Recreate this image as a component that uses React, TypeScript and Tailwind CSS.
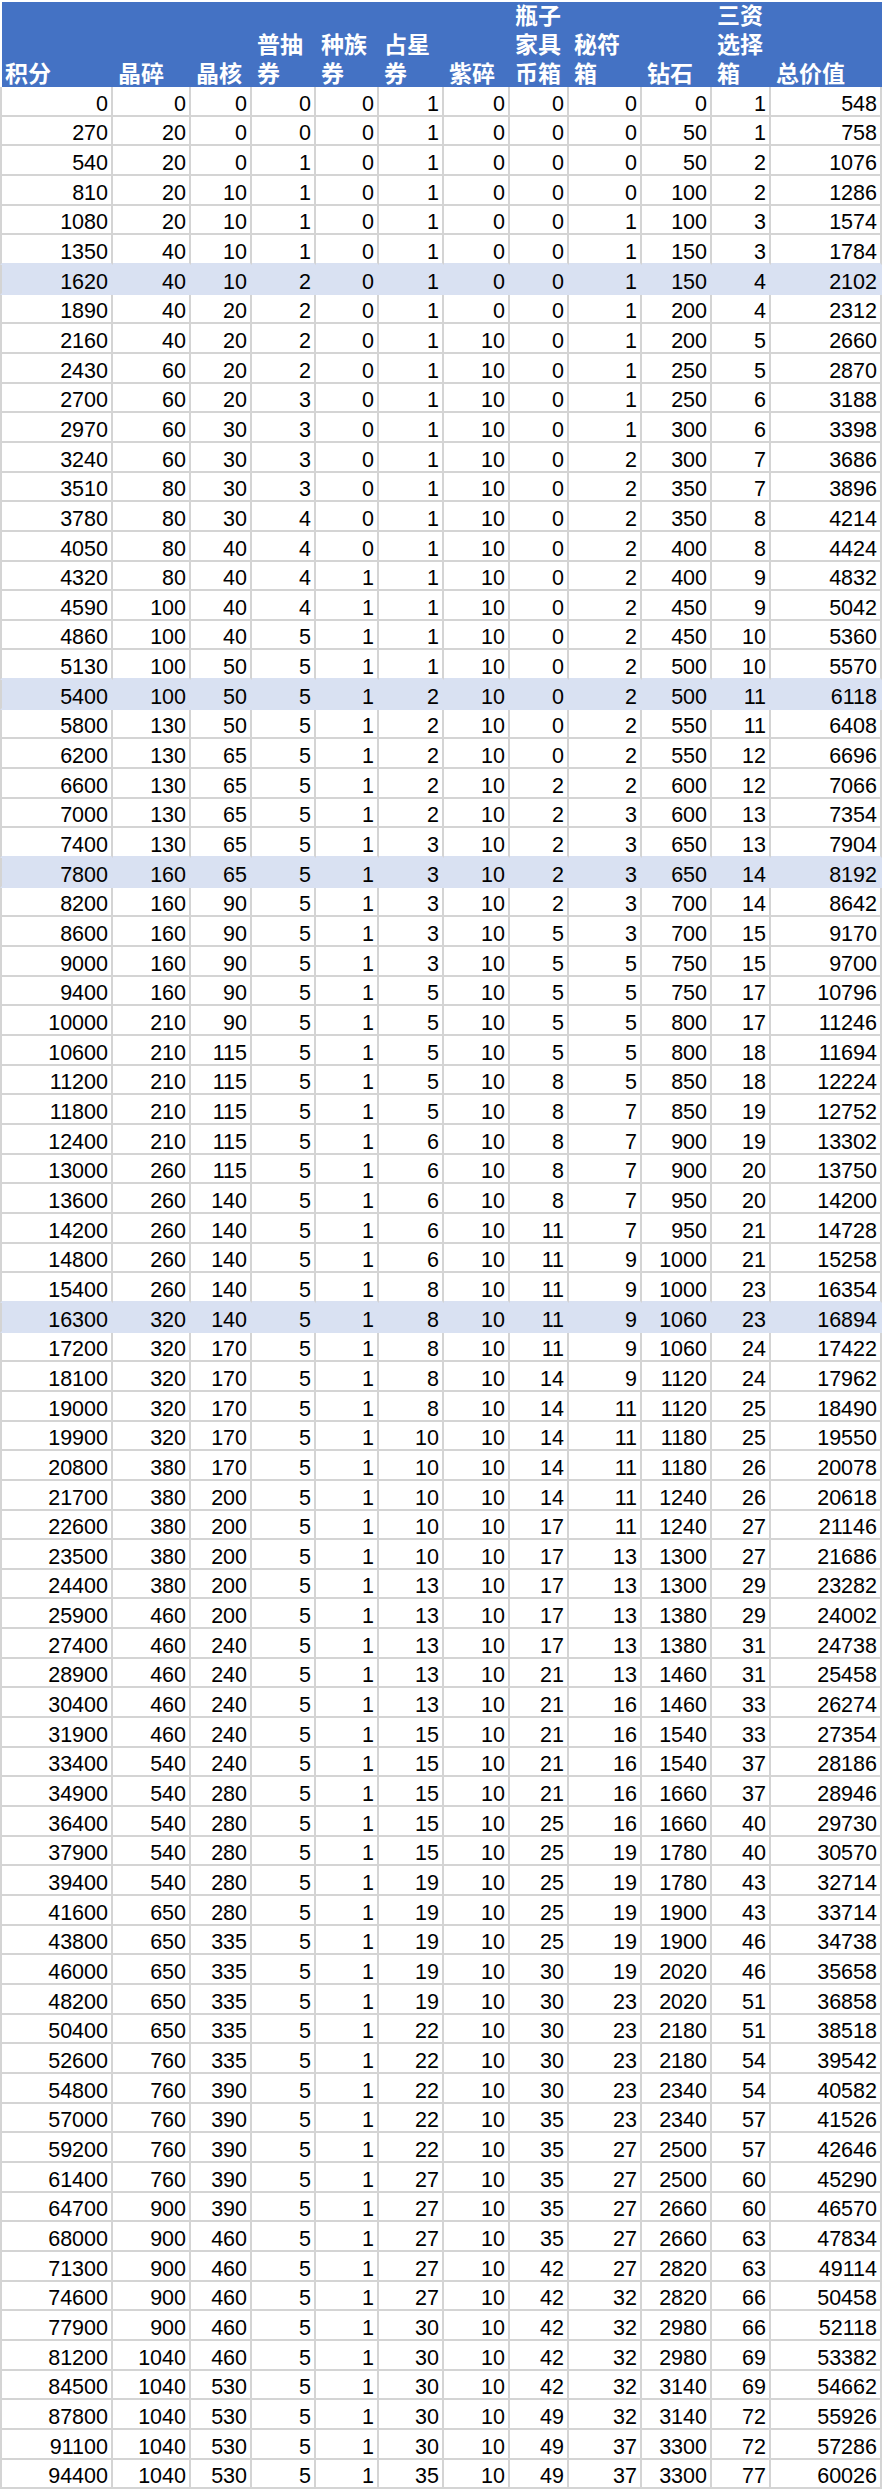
const HEADERS: string[][] = [
  ["积分"],
  ["晶碎"],
  ["晶核"],
  ["普抽", "券"],
  ["种族", "券"],
  ["占星", "券"],
  ["紫碎"],
  ["瓶子", "家具", "币箱"],
  ["秘符", "箱"],
  ["钻石"],
  ["三资", "选择", "箱"],
  ["总价值"],
];

// 积分 晶碎 晶核 普抽券 种族券 占星券 紫碎 瓶子家具币箱 秘符箱 钻石 三资选择箱 总价值
const DATA = `
0 0 0 0 0 1 0 0 0 0 1 548
270 20 0 0 0 1 0 0 0 50 1 758
540 20 0 1 0 1 0 0 0 50 2 1076
810 20 10 1 0 1 0 0 0 100 2 1286
1080 20 10 1 0 1 0 0 1 100 3 1574
1350 40 10 1 0 1 0 0 1 150 3 1784
1620 40 10 2 0 1 0 0 1 150 4 2102
1890 40 20 2 0 1 0 0 1 200 4 2312
2160 40 20 2 0 1 10 0 1 200 5 2660
2430 60 20 2 0 1 10 0 1 250 5 2870
2700 60 20 3 0 1 10 0 1 250 6 3188
2970 60 30 3 0 1 10 0 1 300 6 3398
3240 60 30 3 0 1 10 0 2 300 7 3686
3510 80 30 3 0 1 10 0 2 350 7 3896
3780 80 30 4 0 1 10 0 2 350 8 4214
4050 80 40 4 0 1 10 0 2 400 8 4424
4320 80 40 4 1 1 10 0 2 400 9 4832
4590 100 40 4 1 1 10 0 2 450 9 5042
4860 100 40 5 1 1 10 0 2 450 10 5360
5130 100 50 5 1 1 10 0 2 500 10 5570
5400 100 50 5 1 2 10 0 2 500 11 6118
5800 130 50 5 1 2 10 0 2 550 11 6408
6200 130 65 5 1 2 10 0 2 550 12 6696
6600 130 65 5 1 2 10 2 2 600 12 7066
7000 130 65 5 1 2 10 2 3 600 13 7354
7400 130 65 5 1 3 10 2 3 650 13 7904
7800 160 65 5 1 3 10 2 3 650 14 8192
8200 160 90 5 1 3 10 2 3 700 14 8642
8600 160 90 5 1 3 10 5 3 700 15 9170
9000 160 90 5 1 3 10 5 5 750 15 9700
9400 160 90 5 1 5 10 5 5 750 17 10796
10000 210 90 5 1 5 10 5 5 800 17 11246
10600 210 115 5 1 5 10 5 5 800 18 11694
11200 210 115 5 1 5 10 8 5 850 18 12224
11800 210 115 5 1 5 10 8 7 850 19 12752
12400 210 115 5 1 6 10 8 7 900 19 13302
13000 260 115 5 1 6 10 8 7 900 20 13750
13600 260 140 5 1 6 10 8 7 950 20 14200
14200 260 140 5 1 6 10 11 7 950 21 14728
14800 260 140 5 1 6 10 11 9 1000 21 15258
15400 260 140 5 1 8 10 11 9 1000 23 16354
16300 320 140 5 1 8 10 11 9 1060 23 16894
17200 320 170 5 1 8 10 11 9 1060 24 17422
18100 320 170 5 1 8 10 14 9 1120 24 17962
19000 320 170 5 1 8 10 14 11 1120 25 18490
19900 320 170 5 1 10 10 14 11 1180 25 19550
20800 380 170 5 1 10 10 14 11 1180 26 20078
21700 380 200 5 1 10 10 14 11 1240 26 20618
22600 380 200 5 1 10 10 17 11 1240 27 21146
23500 380 200 5 1 10 10 17 13 1300 27 21686
24400 380 200 5 1 13 10 17 13 1300 29 23282
25900 460 200 5 1 13 10 17 13 1380 29 24002
27400 460 240 5 1 13 10 17 13 1380 31 24738
28900 460 240 5 1 13 10 21 13 1460 31 25458
30400 460 240 5 1 13 10 21 16 1460 33 26274
31900 460 240 5 1 15 10 21 16 1540 33 27354
33400 540 240 5 1 15 10 21 16 1540 37 28186
34900 540 280 5 1 15 10 21 16 1660 37 28946
36400 540 280 5 1 15 10 25 16 1660 40 29730
37900 540 280 5 1 15 10 25 19 1780 40 30570
39400 540 280 5 1 19 10 25 19 1780 43 32714
41600 650 280 5 1 19 10 25 19 1900 43 33714
43800 650 335 5 1 19 10 25 19 1900 46 34738
46000 650 335 5 1 19 10 30 19 2020 46 35658
48200 650 335 5 1 19 10 30 23 2020 51 36858
50400 650 335 5 1 22 10 30 23 2180 51 38518
52600 760 335 5 1 22 10 30 23 2180 54 39542
54800 760 390 5 1 22 10 30 23 2340 54 40582
57000 760 390 5 1 22 10 35 23 2340 57 41526
59200 760 390 5 1 22 10 35 27 2500 57 42646
61400 760 390 5 1 27 10 35 27 2500 60 45290
64700 900 390 5 1 27 10 35 27 2660 60 46570
68000 900 460 5 1 27 10 35 27 2660 63 47834
71300 900 460 5 1 27 10 42 27 2820 63 49114
74600 900 460 5 1 27 10 42 32 2820 66 50458
77900 900 460 5 1 30 10 42 32 2980 66 52118
81200 1040 460 5 1 30 10 42 32 2980 69 53382
84500 1040 530 5 1 30 10 42 32 3140 69 54662
87800 1040 530 5 1 30 10 49 32 3140 72 55926
91100 1040 530 5 1 30 10 49 37 3300 72 57286
94400 1040 530 5 1 35 10 49 37 3300 77 60026
`
  .trim()
  .split("\n")
  .map((line) => line.trim().split(/\s+/));

const HIGHLIGHT = new Set(["1620", "5400", "7800", "16300"]);

const GRID =
  "grid w-[882px] grid-cols-[113px_78px_61px_64px_63px_65px_66px_59px_73px_70px_59px_111px]";

export default function App() {
  return (
    <div className="min-h-[2492px] w-[885px] bg-white pt-[2px] font-['Liberation_Sans',Arial,sans-serif] text-black">
      <div className={`${GRID} h-[85px]`}>
        {HEADERS.map((lines, i) => (
          <div
            key={i}
            className={`flex h-[85px] flex-col justify-end bg-[#4472c4] font-['Noto_Sans_CJK_SC',sans-serif] text-[23px] font-bold leading-[29px] text-white ${
              i === 0 ? "border-l-2 border-white pl-[3px]" : "pl-[5px]"
            }`}
          >
            {lines.map((l) => (
              <div key={l} className="whitespace-nowrap">
                {l}
              </div>
            ))}
          </div>
        ))}
      </div>

      {DATA.map((row, r) => {
        const hl = HIGHLIGHT.has(row[0]);
        const nextHl = r + 1 < DATA.length && HIGHLIGHT.has(DATA[r + 1][0]);
        return (
          <div key={row[0]} className={`${GRID} h-[29.667px] ${hl ? "bg-[#d9e1f2]" : ""}`}>
            {row.map((v, c) => (
              <div
                key={c}
                className={`flex items-end justify-end border-b-2 border-r-2 pr-[3px] text-[21.5px] leading-[21px] ${
                  hl ? "border-r-[#d9e1f2]" : "border-r-[#d4d4d4]"
                } ${hl || nextHl ? "border-b-[#d9e1f2]" : "border-b-[#d4d4d4]"} ${
                  c === 0 ? "border-l-2 border-l-[#d4d4d4]" : ""
                }`}
              >
                {v}
              </div>
            ))}
          </div>
        );
      })}
    </div>
  );
}
